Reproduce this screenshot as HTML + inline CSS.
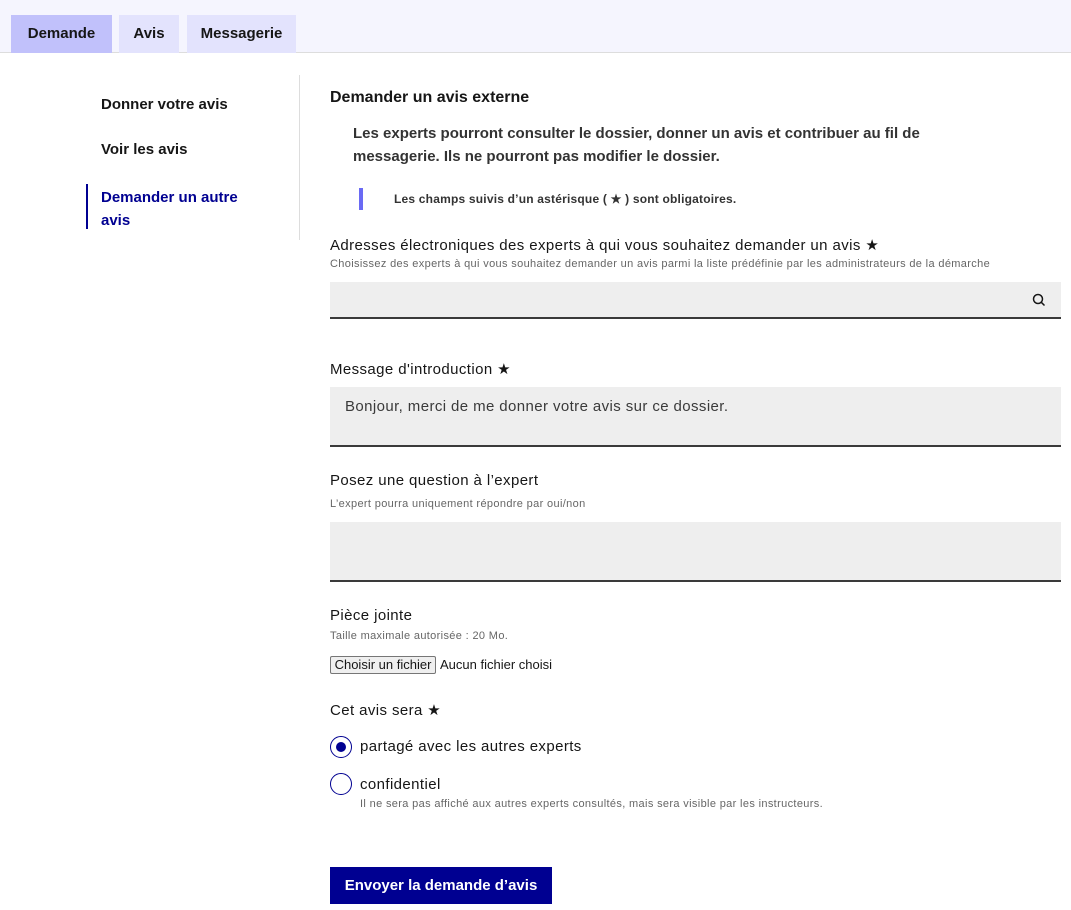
<!DOCTYPE html>
<html><head><meta charset="utf-8"><style>
*{box-sizing:border-box;margin:0;padding:0}
body{width:1071px;height:910px;background:#fff;font-family:"Liberation Sans",sans-serif;color:#161616;position:relative;overflow:hidden}
.top{position:absolute;left:0;top:0;width:1071px;height:53px;background:#f5f5fe;border-bottom:1px solid #ddd}
.tab{position:absolute;top:15px;height:38px;background:#e3e3fd;font-weight:bold;font-size:15px;line-height:38px;text-align:center}
.a{position:absolute;white-space:nowrap}
.field{position:absolute;left:330px;width:731px;background:#eee;border-bottom:2px solid #3a3a3a}
.lbl{font-size:15px;letter-spacing:0.4px}
.hint{font-size:11px;color:#666;letter-spacing:0.35px}
.radio{position:absolute;left:330px;width:22px;height:22px;border:1.5px solid #000091;border-radius:50%}
</style></head><body>
<div class="top"></div>
<div class="tab" style="left:11px;width:101px;background:#c1c1fb">Demande</div>
<div class="tab" style="left:119px;width:60px">Avis</div>
<div class="tab" style="left:187px;width:109px">Messagerie</div>

<div class="a" style="left:101px;top:96px;font-weight:bold;font-size:15px">Donner votre avis</div>
<div class="a" style="left:101px;top:141px;font-weight:bold;font-size:15px">Voir les avis</div>
<div class="a" style="left:101px;top:186px;font-weight:bold;font-size:15px;color:#000091;line-height:23px">Demander un autre<br>avis</div>
<div class="a" style="left:86px;top:184px;width:2px;height:45px;background:#000091"></div>
<div class="a" style="left:299px;top:75px;width:1px;height:165px;background:#ddd"></div>

<div class="a" style="left:330px;top:89px;font-weight:bold;font-size:16px">Demander un avis externe</div>
<div class="a" style="left:353px;top:122px;font-weight:bold;font-size:15px;line-height:23px;color:#333">Les experts pourront consulter le dossier, donner un avis et contribuer au fil de<br>messagerie. Ils ne pourront pas modifier le dossier.</div>
<div class="a" style="left:359px;top:188px;width:4px;height:22px;background:#6a6af4"></div>
<div class="a" style="left:394px;top:192px;font-weight:bold;font-size:12px;color:#333;letter-spacing:0.2px">Les champs suivis d’un astérisque ( ★ ) sont obligatoires.</div>

<div class="a lbl" style="left:330px;top:236px">Adresses électroniques des experts à qui vous souhaitez demander un avis ★</div>
<div class="a hint" style="left:330px;top:258px">Choisissez des experts à qui vous souhaitez demander un avis parmi la liste prédéfinie par les administrateurs de la démarche</div>
<div class="field" style="top:282px;height:37px"></div>
<svg class="a" style="left:1032px;top:293px" width="14" height="14" viewBox="0 0 14 14"><circle cx="6" cy="6" r="4.5" fill="none" stroke="#161616" stroke-width="1.5"/><line x1="9.3" y1="9.3" x2="12.5" y2="12.5" stroke="#161616" stroke-width="1.5"/></svg>

<div class="a lbl" style="left:330px;top:360px">Message d'introduction ★</div>
<div class="field" style="top:387px;height:60px"></div>
<div class="a lbl" style="left:345px;top:398px;color:#3a3a3a">Bonjour, merci de me donner votre avis sur ce dossier.</div>

<div class="a lbl" style="left:330px;top:472px">Posez une question à l’expert</div>
<div class="a hint" style="left:330px;top:498px">L’expert pourra uniquement répondre par oui/non</div>
<div class="field" style="top:522px;height:60px"></div>

<div class="a lbl" style="left:330px;top:607px">Pièce jointe</div>
<div class="a hint" style="left:330px;top:630px">Taille maximale autorisée : 20 Mo.</div>
<div class="a" style="left:330px;top:656px;width:106px;height:18px;border:1px solid #767676;background:#efefef;font-size:13px;text-align:center;line-height:16px;border-radius:2px">Choisir un fichier</div>
<div class="a" style="left:440px;top:657px;font-size:13px">Aucun fichier choisi</div>

<div class="a lbl" style="left:330px;top:701px">Cet avis sera ★</div>
<div class="radio" style="top:736px"></div>
<div class="a" style="left:336px;top:742px;width:10px;height:10px;border-radius:50%;background:#000091"></div>
<div class="a lbl" style="left:360px;top:738px">partagé avec les autres experts</div>
<div class="radio" style="top:773px"></div>
<div class="a lbl" style="left:360px;top:776px">confidentiel</div>
<div class="a hint" style="left:360px;top:798px">Il ne sera pas affiché aux autres experts consultés, mais sera visible par les instructeurs.</div>

<div class="a" style="left:330px;top:867px;width:222px;height:37px;background:#000091;color:#fff;font-weight:bold;font-size:15px;text-align:center;line-height:37px">Envoyer la demande d’avis</div>
</body></html>
